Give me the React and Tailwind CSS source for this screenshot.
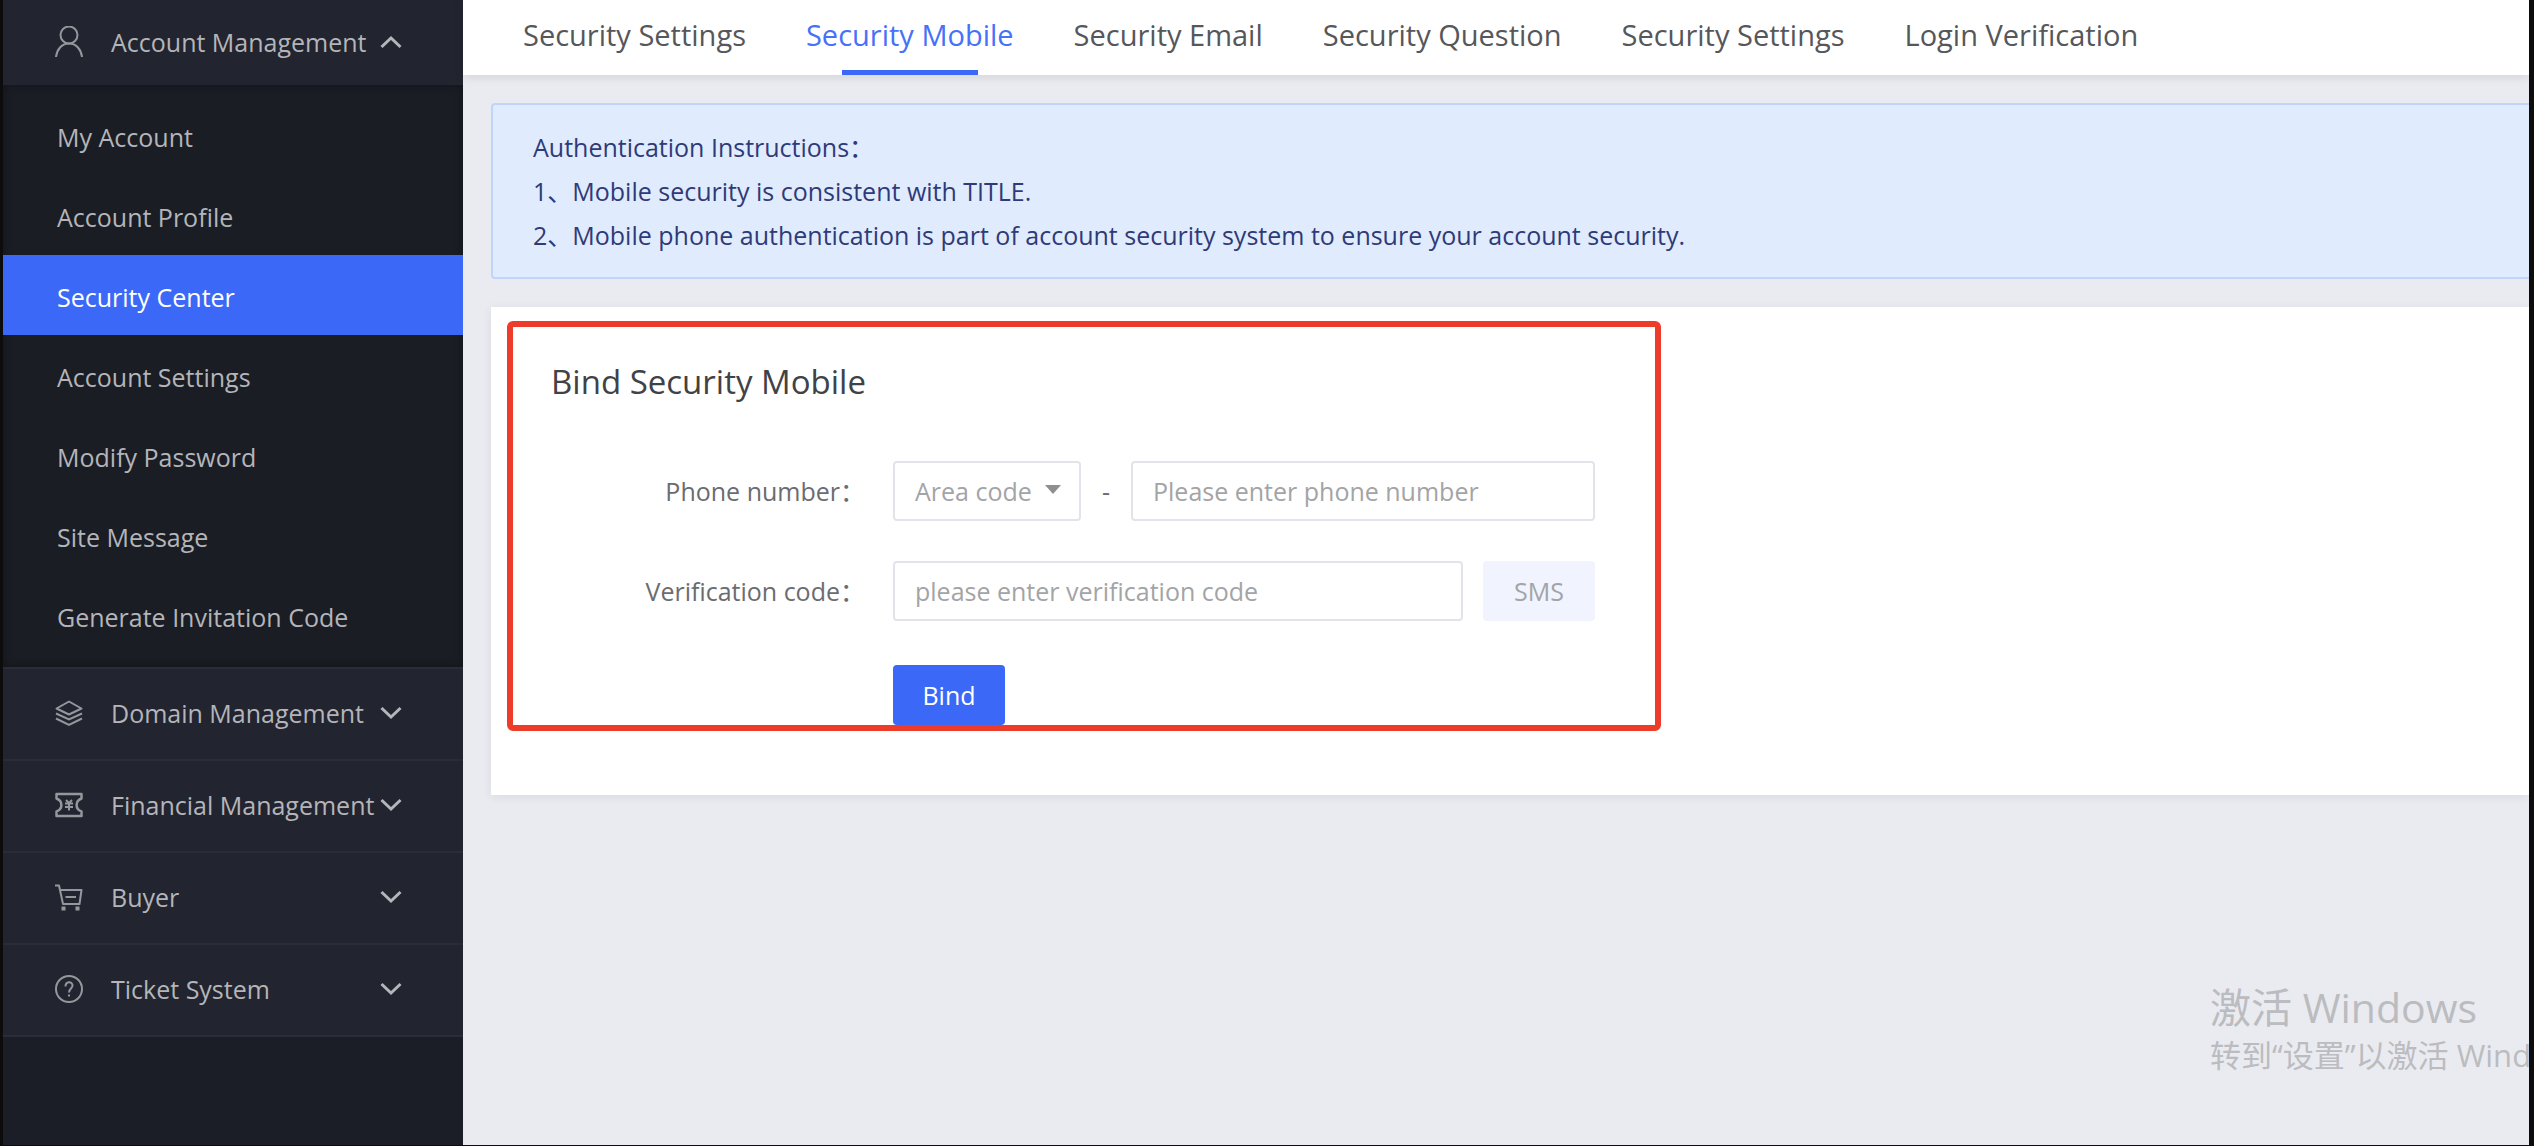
import React from "react";

const iconProps = {
  viewBox: "0 0 28 28",
  fill: "none",
  stroke: "currentColor",
  strokeWidth: 2,
  "aria-hidden": true,
  className: "size-7 shrink-0",
};

const UserIcon = () => (
  <svg {...iconProps} viewBox="0 0 28 32" className="h-8 w-7 shrink-0">
    <circle cx="14" cy="9" r="8.5" />
    <path d="M1 31C2 23 7 17.5 14 17.5S26 23 27 31" />
  </svg>
);

const LayersIcon = () => (
  <svg {...iconProps}>
    <path d="M14 2.5L26.5 9.5L14 15.5L1.500 9.500Z" strokeLinejoin="round" />
    <path d="M1 14.500L14 20.500L27 14.500M1 19.500L14 26L27 19.500" />
  </svg>
);

const CouponIcon = () => (
  <svg {...iconProps}>
    <path d="M1.500 3H26.500V7.500C20 10 20 18 26.500 20.500V25H1.500V20.500C8 18 8 10 1.500 7.500Z" strokeWidth="2.500" strokeLinejoin="round" />
    <path d="M11 9L14 12L17 9M10 12.500H18M10 16H18M14 12V19.500" />
  </svg>
);

const CartIcon = () => (
  <svg {...iconProps}>
    <path d="M0 2.500H4L8 21H24.500L26.500 7H5.500" strokeLinejoin="round" />
    <path d="M10.500 14H21" />
    <rect x="7.500" y="24.500" width="2" height="2" />
    <rect x="21.500" y="24.500" width="2" height="2" />
  </svg>
);

const HelpIcon = () => (
  <svg {...iconProps}>
    <circle cx="14" cy="14" r="13" />
    <path d="M10.500 11.500C10.500 6 17.500 6 17.500 10.500C17.500 13.500 14 13.500 14 17.500M14 19.500V21.500" />
  </svg>
);

function Chevron({ up }) {
  return (
    <svg viewBox="0 0 22 14" fill="none" stroke="currentColor" strokeWidth="3" aria-hidden className="h-3.5 w-[22px] shrink-0 text-[#b5b6ba]">
      <path d={up ? "M1.500 12L11 3L20.500 12" : "M1.500 2L11 11L20.500 2"} />
    </svg>
  );
}

const accountLinks = [
  "My Account",
  "Account Profile",
  "Security Center",
  "Account Settings",
  "Modify Password",
  "Site Message",
  "Generate Invitation Code",
];

const groups = [
  ["Domain Management", LayersIcon],
  ["Financial Management", CouponIcon],
  ["Buyer", CartIcon],
  ["Ticket System", HelpIcon],
];

const tabs = [
  "Security Settings",
  "Security Mobile",
  "Security Email",
  "Security Question",
  "Security Settings",
  "Login Verification",
];

function GroupButton({ label, Icon, open }) {
  return (
    <button
      type="button"
      aria-expanded={open}
      className={`flex w-full items-center bg-[#22242f] pr-[61px] pb-0.5 pl-[52px] text-left ${open ? "h-[85px]" : "h-[92px] border-t-2 border-[#2a2d39]"}`}
    >
      <Icon />
      <span className="ml-7 flex-1 whitespace-nowrap text-[#b4b5b9]">{label}</span>
      <Chevron up={open} />
    </button>
  );
}

function Sidebar() {
  return (
    <nav className="w-[460px] shrink-0 bg-[#1b1e26] text-[25px] leading-9 text-[#96979c]">
      <GroupButton label="Account Management" Icon={UserIcon} open />
      <ul className="bg-[#1b1d25] pt-2.5 pb-3 shadow-[inset_0_0_10px_rgba(0,0,0,0.35)]">
        {accountLinks.map((label) => {
          const active = label === "Security Center";
          return (
            <li key={label}>
              <a
                href="#"
                aria-current={active ? "page" : undefined}
                className={`flex h-20 items-center pt-1 pl-[54px] ${active ? "bg-[#3c68f8] text-white" : "text-[#b4b5b9]"}`}
              >
                {label}
              </a>
            </li>
          );
        })}
      </ul>
      {groups.map(([label, Icon]) => (
        <GroupButton key={label} label={label} Icon={Icon} open={false} />
      ))}
      <div className="h-0.5 bg-[#2a2d39]" />
    </nav>
  );
}

function Tabs() {
  return (
    <header className="flex h-[75px] gap-[60px] bg-white pl-[60px] text-[29px] leading-[70px] text-[#55575b] shadow-[0_2px_10px_rgba(0,0,0,0.1)]">
      {tabs.map((label, i) => (
        <a
          key={i}
          href="#"
          className={`flex flex-col items-center whitespace-nowrap ${i === 1 ? "text-[#4671f8]" : ""}`}
        >
          {label}
          {i === 1 && <span className="h-[5px] w-[136px] bg-[#3c68f8]" />}
        </a>
      ))}
    </header>
  );
}

const field = "h-[60px] rounded border-2 border-[#e2e4e9] bg-white px-5 text-[#a3a4a6] placeholder:text-[#a3a4a6] outline-none";

function BindForm() {
  return (
    <form className="w-[1154px] rounded-md border-6 border-[#ee3c2b] pt-[35px]">
      <h1 className="pl-[38px] text-[33px] leading-10 text-[#404246]">Bind Security Mobile</h1>
      <div className="mt-[59px] grid grid-cols-[352px_702px] gap-x-7 text-[25px] leading-9 text-[#6b6c6f]">
        <label htmlFor="phone" className="flex h-[60px] items-center justify-end">Phone number：</label>
        <div className="flex">
          <div className="relative">
            <select aria-label="Area code" defaultValue="" className={`${field} w-[188px] appearance-none`}>
              <option value="">Area code</option>
            </select>
            <svg viewBox="0 0 16 9" className="pointer-events-none absolute top-6 right-5 h-[9px] w-4 text-[#8e8f91]" aria-hidden>
              <path d="M0 0H16L8 9Z" fill="currentColor" />
            </svg>
          </div>
          <span className="flex w-[50px] items-center justify-center">-</span>
          <input id="phone" type="tel" placeholder="Please enter phone number" className={`${field} w-0 flex-1`} />
        </div>
        <label htmlFor="code" className="mt-10 flex h-[60px] items-center justify-end">Verification code：</label>
        <div className="mt-10 flex gap-5">
          <input id="code" type="text" placeholder="please enter verification code" className={`${field} w-0 flex-1`} />
          <button type="button" className="h-[60px] w-28 rounded bg-[#f1f4fe] text-[#a3a4a8]">SMS</button>
        </div>
        <button type="submit" className="col-start-2 mt-11 h-[60px] w-28 rounded bg-[#3c68f8] text-white">Bind</button>
      </div>
    </form>
  );
}

export default function App() {
  return (
    <div className="relative flex min-h-screen overflow-hidden border-r-5 border-b border-l-3 border-[#0c0c0c] bg-[#eaebf0] font-['Open_Sans','Noto_Sans_CJK_SC',sans-serif]">
      <Sidebar />
      <main className="min-w-0 flex-1">
        <Tabs />
        <section className="mt-7 ml-7 rounded-l border-2 border-r-0 border-[#bfd5fb] bg-[#e0ecfd] px-10 py-5 text-[25px] leading-11 text-[#2f3a78]">
          <p>Authentication Instructions：</p>
          <p>1、Mobile security is consistent with TITLE.</p>
          <p>2、Mobile phone authentication is part of account security system to ensure your account security.</p>
        </section>
        <section className="mt-7 ml-7 bg-white pt-3.5 pb-16 pl-4 shadow-[0_2px_10px_rgba(0,0,0,0.07)]">
          <BindForm />
        </section>
      </main>
      <div className="pointer-events-none absolute right-0 bottom-[68px] w-[319px] whitespace-nowrap text-[#bbbcbf]">
        <p className="text-[41px] leading-[52px]">激活 Windows</p>
        <p className="text-[31px] leading-11">转到“设置”以激活 Wind</p>
      </div>
    </div>
  );
}
